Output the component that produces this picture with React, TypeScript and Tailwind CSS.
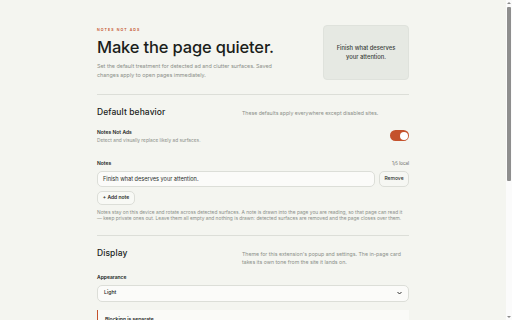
import React from "react";

const font = { fontFamily: "Inter, 'Liberation Sans', sans-serif" };

function Toggle({ on = true }: { on?: boolean }) {
    return (
        <span className={`flex h-[11px] w-[19px] items-center rounded-full p-[1.5px] ${on ? "justify-end bg-[#c4522c]" : "justify-start bg-[#cfd1cb]"}`}>
            <span className="size-[8px] rounded-full bg-white" />
        </span>
    );
}

function SectionHead({ title, children }: { title: string; children: React.ReactNode }) {
    return (
        <div className="grid grid-cols-[145px_1fr] items-start">
            <h2 className="text-[8.5px] font-medium leading-[12px] tracking-[0.01em] text-[#1b1e1b]">{title}</h2>
            <p className="mt-[3px] text-[5.2px] leading-[8px] text-[#8b8f89]">{children}</p>
        </div>
    );
}

// imitation of the browser's thin scrollbar on the right edge
function Scrollbar() {
    return (
        <div className="fixed top-0 right-0 flex h-full w-[6px] flex-col items-center bg-[#fbfbfb]">
            <span className="mt-[2px] h-0 w-0 border-x-[2px] border-b-[2px] border-x-transparent border-b-[#8a8a8a]" />
            <span className="mt-[3px] h-[174px] w-[4px] rounded-[1px] bg-[#8e8e8e]" />
            <span className="mt-auto mb-[2px] h-0 w-0 border-x-[2px] border-t-[2px] border-x-transparent border-t-[#8a8a8a]" />
        </div>
    );
}

export default function App() {
    return (
        <div className="min-h-[420px] bg-[#f4f5f0] pr-[6px] text-[#1b1e1b]" style={font}>
            <Scrollbar />
            <div className="mx-auto w-[312px] pt-[25px] pb-10">
                <header className="flex items-start justify-between">
                    <div className="w-[193px] pt-[2px]">
                        <p className="text-[3.6px] font-semibold uppercase leading-[6px] tracking-[0.3em] text-[#c4522c]">Notes not ads</p>
                        <h1 className="mt-[4px] text-[16.5px] font-medium leading-[20px] tracking-[-0.01em]">Make the page quieter.</h1>
                        <p className="mt-[4.5px] text-[5.4px] leading-[9px] text-[#8b8f89]">
                            Set the default treatment for detected ad and clutter surfaces. Saved changes apply to open pages immediately.
                        </p>
                    </div>
                    <div className="flex h-[55px] w-[86px] items-center justify-center rounded-[4px] border border-[#dfe2dc] bg-[#e6e9e3] px-2 text-center">
                        <p className="text-[5.8px] font-medium leading-[8.5px] text-[#3a3f3a]">Finish what deserves your attention.</p>
                    </div>
                </header>

                <div className="mt-[14px] border-t border-[#dcded8]" />

                <section className="pt-[11px]">
                    <SectionHead title="Default behavior">These defaults apply everywhere except disabled sites.</SectionHead>

                    <div className="mt-[10.5px] flex items-center justify-between">
                        <div>
                            <p className="text-[5px] font-semibold leading-[7px]">Notes Not Ads</p>
                            <p className="mt-[1.5px] text-[4.8px] leading-[6px] text-[#8b8f89]">Detect and visually replace likely ad surfaces.</p>
                        </div>
                        <Toggle />
                    </div>

                    <div className="mt-[16.5px] flex items-center justify-between">
                        <p className="text-[5px] font-semibold leading-[7px]">Notes</p>
                        <p className="text-[4.4px] leading-[7px] text-[#5d615c]">1/5 local</p>
                    </div>
                    <div className="mt-[4.5px] flex gap-[4px]">
                        <div className="flex h-[16px] flex-1 items-center rounded-[5px] border border-[#dcded8] bg-[#fbfbf9] px-[5px] text-[5.6px] text-[#2a2e2a]">
                            Finish what deserves your attention.
                        </div>
                        <button className="flex h-[16px] w-[30px] items-center justify-center rounded-[5px] border border-[#dcded8] bg-[#f6f7f3] text-[5px] font-medium text-[#2a2e2a]">
                            Remove
                        </button>
                    </div>
                    <button className="mt-[4px] flex h-[14px] w-[38px] items-center justify-center rounded-[5px] border border-[#dcded8] bg-[#f8f9f5] text-[5px] font-semibold text-[#2a2e2a]">
                        + Add note
                    </button>
                    <p className="mt-[3.75px] text-[4.85px] leading-[6.5px] text-[#8b8f89]">
                        Notes stay on this device and rotate across detected surfaces. A note is drawn into the page you are reading, so that page can read it {"—\u00a0keep"} private ones out. Leave them all empty and nothing is drawn: detected surfaces are removed and the page closes over them.
                    </p>
                </section>

                <div className="mt-[12.75px] border-t border-[#dcded8]" />

                <section className="pt-[11px]">
                    <SectionHead title="Display">
                        Theme for this extension's popup and settings. The in-page card takes its own tone from the site it lands on.
                    </SectionHead>

                    <p className="mt-[8.5px] text-[5px] font-semibold leading-[7px]">Appearance</p>
                    <div className="mt-[3.5px] flex h-[17px] items-center justify-between rounded-[5px] border border-[#dcded8] bg-[#fbfbf9] px-[6px]">
                        <span className="text-[5.2px] font-medium">Light</span>
                        <svg width="5" height="4" viewBox="0 0 10 8" fill="none" stroke="#333" strokeWidth="2">
                            <path d="M1 2l4 4 4-4" />
                        </svg>
                    </div>

                    <div className="mt-[8px] border-l border-[#c4522c] bg-[#fafaf7] px-[7px] py-[6px]">
                        <p className="text-[5px] font-semibold leading-[7px]">Blocking is separate</p>
                        <p className="mt-[2px] text-[4.4px] leading-[6.5px] text-[#8b8f89]">
                            Notes Not Ads only replaces what it detects. Pair it with a blocker if you want requests stopped.
                        </p>
                    </div>
                </section>
            </div>
        </div>
    );
}
